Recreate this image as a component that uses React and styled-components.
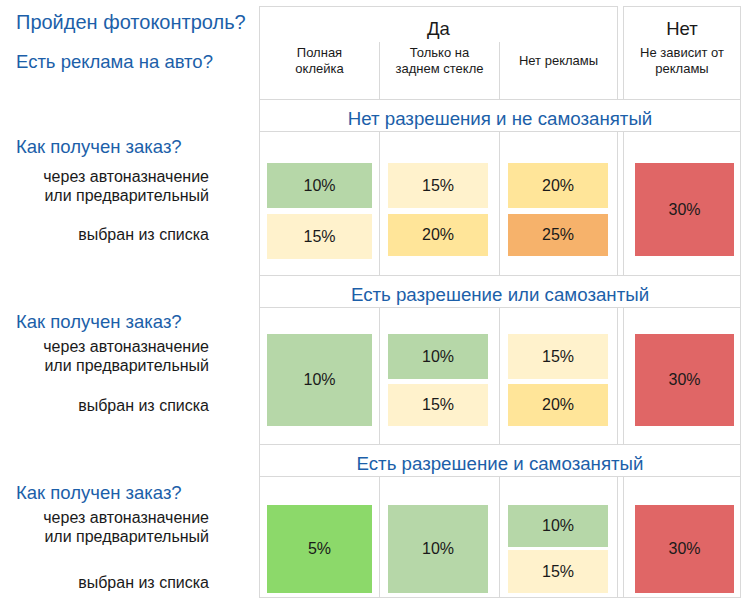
import React from 'react';
import styled, { createGlobalStyle } from 'styled-components';

const LINE = '#d9d9d9';
const BLUE = '#1c5fa9';
const GREEN = '#b6d7a8';
const BRIGHT = '#8cd96a';
const PALE = '#fff2cc';
const YELLOW = '#ffe599';
const ORANGE = '#f6b26b';
const RED = '#e06666';

const GlobalStyle = createGlobalStyle`
    * { box-sizing: border-box; }
    body {
        margin: 0;
        background: #fff;
        color: #1a1a1a;
        font-family: "Liberation Sans", Arial, sans-serif;
    }
`;

const Page = styled.div`
    padding-top: 6px;
`;

const Grid = styled.div`
    display: grid;
    grid-template-columns: 259px 120px 120px 119px 5px 118px;
    grid-template-rows: 93px 33px 143px 33px 136px 33px 120px 1px;
`;

const Spacer = styled.div``;

const LeftHead = styled.div`
    padding: 4px 0 0 16px;
    color: ${BLUE};
    white-space: nowrap;
`;

const HeadQuestion = styled.div`
    font-size: ${(p) => p.$size}px;
    line-height: 24px;
    margin-top: ${(p) => p.$mt || 0}px;
`;

const GroupHead = styled.div`
    grid-column: ${(p) => p.$col};
    border: 1px solid ${LINE};
    border-bottom: none;
    display: flex;
    flex-direction: column;
`;

const GroupTitle = styled.div`
    padding-top: 11px;
    height: 33px;
    font-size: 18.5px;
    line-height: 22px;
    text-align: center;
`;

const SubRow = styled.div`
    flex: 1;
    margin-top: 2px;
    display: grid;
    grid-template-columns: ${(p) => p.$cols};
`;

const SubHead = styled.div`
    border-left: ${(p) => (p.$divider ? `1px solid ${LINE}` : 'none')};
    padding-top: 3px;
`;

const SubText = styled.div`
    height: 32px;
    display: flex;
    align-items: center;
    justify-content: center;
    text-align: center;
    font-size: 13px;
    line-height: 16px;
`;

const SectionTitle = styled.div`
    grid-column: 2 / 7;
    border: 1px solid ${LINE};
    padding-top: 7px;
    color: ${BLUE};
    font-size: 18.7px;
    line-height: 23px;
    text-align: center;
`;

const LabelCell = styled.div`
    padding: ${(p) => p.$top}px 50px 0 16px;
    display: flex;
    flex-direction: column;
`;

const Question = styled.div`
    color: ${BLUE};
    font-size: 18.5px;
    line-height: 20px;
    white-space: nowrap;
`;

const SubLabel = styled.div`
    margin-top: ${(p) => p.$mt}px;
    text-align: right;
    font-size: 16px;
    line-height: 19px;
    white-space: nowrap;
`;

const Cell = styled.div`
    border-left: 1px solid ${LINE};
    border-right: ${(p) => (p.$right ? `1px solid ${LINE}` : 'none')};
    padding-top: ${(p) => p.$top}px;
    padding-left: ${(p) => p.$ml}px;
    display: flex;
    flex-direction: column;
    gap: ${(p) => p.$gap}px;
`;

const Box = styled.div`
    width: ${(p) => p.$w}px;
    height: ${(p) => p.$h}px;
    background: ${(p) => p.$bg};
    display: flex;
    align-items: center;
    justify-content: center;
    font-size: 16px;
`;

const Footer = styled.div`
    grid-column: 2 / 7;
    background: ${LINE};
`;

const COLS = [
    { ml: 7, w: 105 },
    { ml: 8, w: 100 },
    { ml: 8, w: 100, right: true },
    { ml: 11, w: 99, right: true },
];

const SECTIONS = [
    {
        title: 'Нет разрешения и не самозанятый',
        top: 31,
        label: { top: 5, g1: 10, g2: 20 },
        cells: [
            { gap: 6, boxes: [['10%', GREEN, 45], ['15%', PALE, 45]] },
            { gap: 6, boxes: [['15%', PALE, 45], ['20%', YELLOW, 42]] },
            { gap: 6, boxes: [['20%', YELLOW, 45], ['25%', ORANGE, 42]] },
            { gap: 0, boxes: [['30%', RED, 93]] },
        ],
    },
    {
        title: 'Есть разрешение или самозантый',
        top: 26,
        label: { top: 4, g1: 5, g2: 21 },
        cells: [
            { gap: 0, boxes: [['10%', GREEN, 92]] },
            { gap: 5, boxes: [['10%', GREEN, 45], ['15%', PALE, 42]] },
            { gap: 5, boxes: [['15%', PALE, 45], ['20%', YELLOW, 42]] },
            { gap: 0, boxes: [['30%', RED, 92]] },
        ],
    },
    {
        title: 'Есть разрешение и самозанятый',
        top: 28,
        label: { top: 6, g1: 5, g2: 27 },
        cells: [
            { gap: 0, boxes: [['5%', BRIGHT, 88]] },
            { gap: 0, boxes: [['10%', GREEN, 88]] },
            { gap: 3, boxes: [['10%', GREEN, 42], ['15%', PALE, 43]] },
            { gap: 0, boxes: [['30%', RED, 88]] },
        ],
    },
];

function Section({ section }) {
    const { title, top, label, cells } = section;
    return (
        <>
            <Spacer />
            <SectionTitle>{title}</SectionTitle>
            <LabelCell $top={label.top}>
                <Question>Как получен заказ?</Question>
                <SubLabel $mt={label.g1}>
                    через автоназначение
                    <br />
                    или предварительный
                </SubLabel>
                <SubLabel $mt={label.g2}>выбран из списка</SubLabel>
            </LabelCell>
            {cells.map((cell, i) => (
                <React.Fragment key={i}>
                    {i === 3 && <Spacer />}
                    <Cell $top={top} $ml={COLS[i].ml} $gap={cell.gap} $right={COLS[i].right}>
                        {cell.boxes.map(([value, color, h]) => (
                            <Box key={value + h} $w={COLS[i].w} $h={h} $bg={color}>
                                {value}
                            </Box>
                        ))}
                    </Cell>
                </React.Fragment>
            ))}
        </>
    );
}

export default function App() {
    return (
        <Page>
            <GlobalStyle />
            <Grid>
                <LeftHead>
                    <HeadQuestion $size={20}>Пройден фотоконтроль?</HeadQuestion>
                    <HeadQuestion $size={18.5} $mt={16}>
                        Есть реклама на авто?
                    </HeadQuestion>
                </LeftHead>
                <GroupHead $col="2 / 5">
                    <GroupTitle>Да</GroupTitle>
                    <SubRow $cols="119px 120px 118px">
                        <SubHead>
                            <SubText>
                                Полная
                                <br />
                                оклейка
                            </SubText>
                        </SubHead>
                        <SubHead $divider>
                            <SubText>
                                Только на
                                <br />
                                заднем стекле
                            </SubText>
                        </SubHead>
                        <SubHead $divider>
                            <SubText>Нет рекламы</SubText>
                        </SubHead>
                    </SubRow>
                </GroupHead>
                <Spacer />
                <GroupHead $col="6 / 7">
                    <GroupTitle>Нет</GroupTitle>
                    <SubRow $cols="1fr">
                        <SubHead>
                            <SubText>
                                Не зависит от
                                <br />
                                рекламы
                            </SubText>
                        </SubHead>
                    </SubRow>
                </GroupHead>
                {SECTIONS.map((s) => (
                    <Section key={s.title} section={s} />
                ))}
                <Spacer />
                <Footer />
            </Grid>
        </Page>
    );
}
